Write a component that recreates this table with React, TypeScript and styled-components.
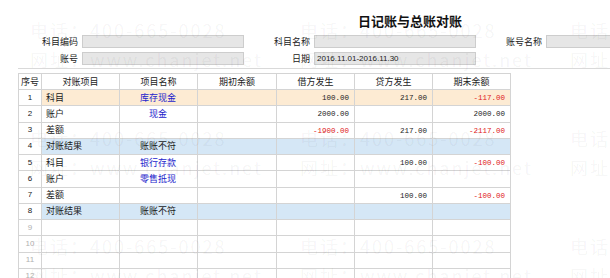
import React from 'react';
import styled, { createGlobalStyle } from 'styled-components';

const GlobalStyle = createGlobalStyle`
  html, body {
    margin: 0;
    padding: 0;
    background: #fff;
  }
  body {
    font-family: "Noto Sans CJK SC", "Liberation Sans", sans-serif;
    color: #1a1a1a;
  }
`;

const Page = styled.div`
  position: relative;
  width: 610px;
  height: 278px;
  overflow: hidden;
  padding-top: 13px;
  box-sizing: border-box;
  background: #fff;
`;

const Title = styled.h1`
  margin: 0;
  padding-left: 358px;
  font-size: 13px;
  line-height: 16px;
  font-weight: bold;
  color: #111;
  white-space: nowrap;
`;

const Form = styled.div`
  display: grid;
  grid-template-columns: 80px 162px 66px 162px 66px 162px;
  grid-auto-rows: 13px;
  column-gap: 2px;
  row-gap: 4px;
  margin-top: 6px;
`;

const Label = styled.label`
  font-size: 9px;
  line-height: 13px;
  text-align: right;
  padding-right: 2px;
  white-space: nowrap;
  color: #222;
`;

const Field = styled.div`
  height: 13px;
  box-sizing: border-box;
  background: #e6e6e6;
  border: 1px solid #cdcdcd;
  font-family: "Liberation Sans", sans-serif;
  font-size: 8px;
  line-height: 11px;
  padding-left: 2px;
  color: #222;
`;

const Divider = styled.div`
  margin: 3px 0 0 18px;
  border-top: 1px solid #d9d9d9;
`;

const Grid = styled.table`
  margin: 4px 0 0 18px;
  border-collapse: collapse;
  table-layout: fixed;
  width: 493px;
`;

const Head = styled.th`
  height: 15px;
  padding: 0;
  border: 1px solid #d4d4d4;
  font-size: 9px;
  line-height: 12px;
  font-weight: normal;
  text-align: center;
  color: #222;
  background: #fff;
`;

type Tone = 'orange' | 'blue' | undefined;

const toneBg = (t: Tone) => (t === 'orange' ? '#fdebd3' : t === 'blue' ? '#d5e7f6' : 'transparent');

const Seq = styled.td<{ $faded?: boolean }>`
  height: 15.25px;
  padding: 0;
  border: 1px solid #d4d4d4;
  font-family: "Liberation Sans", sans-serif;
  font-size: 8px;
  line-height: 12px;
  text-align: center;
  color: ${(p) => (p.$faded ? '#b0b0b0' : '#222')};
`;

const Cell = styled.td<{ $tone?: Tone; $align?: 'left' | 'center' | 'right' }>`
  height: 15.25px;
  padding: 0 5px 0 4px;
  border: 1px solid #d4d4d4;
  font-size: 9px;
  line-height: 12px;
  white-space: nowrap;
  overflow: hidden;
  text-align: ${(p) => p.$align || 'left'};
  background: ${(p) => toneBg(p.$tone)};
`;

const Link = styled.span`
  color: #1c1ccc;
`;

const Amount = styled.span<{ $neg?: boolean }>`
  font-family: "Liberation Mono", monospace;
  font-size: 7.5px;
  color: ${(p) => (p.$neg ? '#e02020' : '#222')};
`;

const Watermark = styled.div`
  position: absolute;
  inset: 0;
  pointer-events: none;
  padding: 16px 0 0 30px;
  display: grid;
  grid-template-columns: repeat(3, 270px);
  grid-auto-rows: 108px;
`;

const Mark = styled.div`
  font-family: "Noto Sans CJK SC", sans-serif;
  font-size: 18px;
  line-height: 29px;
  letter-spacing: 2px;
  white-space: nowrap;
  color: rgba(0, 0, 0, 0.05);
`;

type Row = {
  item?: string;
  name?: string;
  link?: boolean;
  debit?: string;
  credit?: string;
  end?: string;
  tone?: Tone;
};

const rows: Row[] = [
  { item: '科目', name: '库存现金', link: true, debit: '100.00', credit: '217.00', end: '-117.00', tone: 'orange' },
  { item: '账户', name: '现金', link: true, debit: '2000.00', end: '2000.00' },
  { item: '差额', debit: '-1900.00', credit: '217.00', end: '-2117.00' },
  { item: '对账结果', name: '账账不符', tone: 'blue' },
  { item: '科目', name: '银行存款', link: true, credit: '100.00', end: '-100.00' },
  { item: '账户', name: '零售抵现', link: true },
  { item: '差额', credit: '100.00', end: '-100.00' },
  { item: '对账结果', name: '账账不符', tone: 'blue' },
  {},
  {},
  {},
  {},
];

const heads = ['序号', '对账项目', '项目名称', '期初余额', '借方发生', '贷方发生', '期末余额'];
const widths = [23, 78, 78, 79, 78, 78, 78];

function Money({ v }: { v?: string }) {
  if (!v) return null;
  return <Amount $neg={v.startsWith('-')}>{v}</Amount>;
}

function App() {
  return (
    <Page>
      <GlobalStyle />
      <Title>日记账与总账对账</Title>
      <Form>
        <Label>科目编码</Label>
        <Field />
        <Label>科目名称</Label>
        <Field />
        <Label>账号名称</Label>
        <Field />
        <Label>账号</Label>
        <Field />
        <Label>日期</Label>
        <Field>2016.11.01-2016.11.30</Field>
      </Form>
      <Divider />
      <Grid>
        <colgroup>
          {widths.map((w, i) => (
            <col key={i} style={{ width: w }} />
          ))}
        </colgroup>
        <thead>
          <tr>
            {heads.map((h) => (
              <Head key={h}>{h}</Head>
            ))}
          </tr>
        </thead>
        <tbody>
          {rows.map((r, i) => (
            <tr key={i}>
              <Seq $faded={i >= 8}>{i + 1}</Seq>
              <Cell $tone={r.tone}>{r.item}</Cell>
              <Cell $tone={r.tone} $align="center">
                {r.link ? <Link>{r.name}</Link> : r.name}
              </Cell>
              <Cell $tone={r.tone} $align="right" />
              <Cell $tone={r.tone} $align="right">
                <Money v={r.debit} />
              </Cell>
              <Cell $tone={r.tone} $align="right">
                <Money v={r.credit} />
              </Cell>
              <Cell $tone={r.tone} $align="right">
                <Money v={r.end} />
              </Cell>
            </tr>
          ))}
        </tbody>
      </Grid>
      <Watermark>
        {Array.from({ length: 9 }).map((_, i) => (
          <div key={i}>
            <Mark>电话：400-665-0028</Mark>
            <Mark>网址：www.chanjet.net</Mark>
          </div>
        ))}
      </Watermark>
    </Page>
  );
}

export default App;
